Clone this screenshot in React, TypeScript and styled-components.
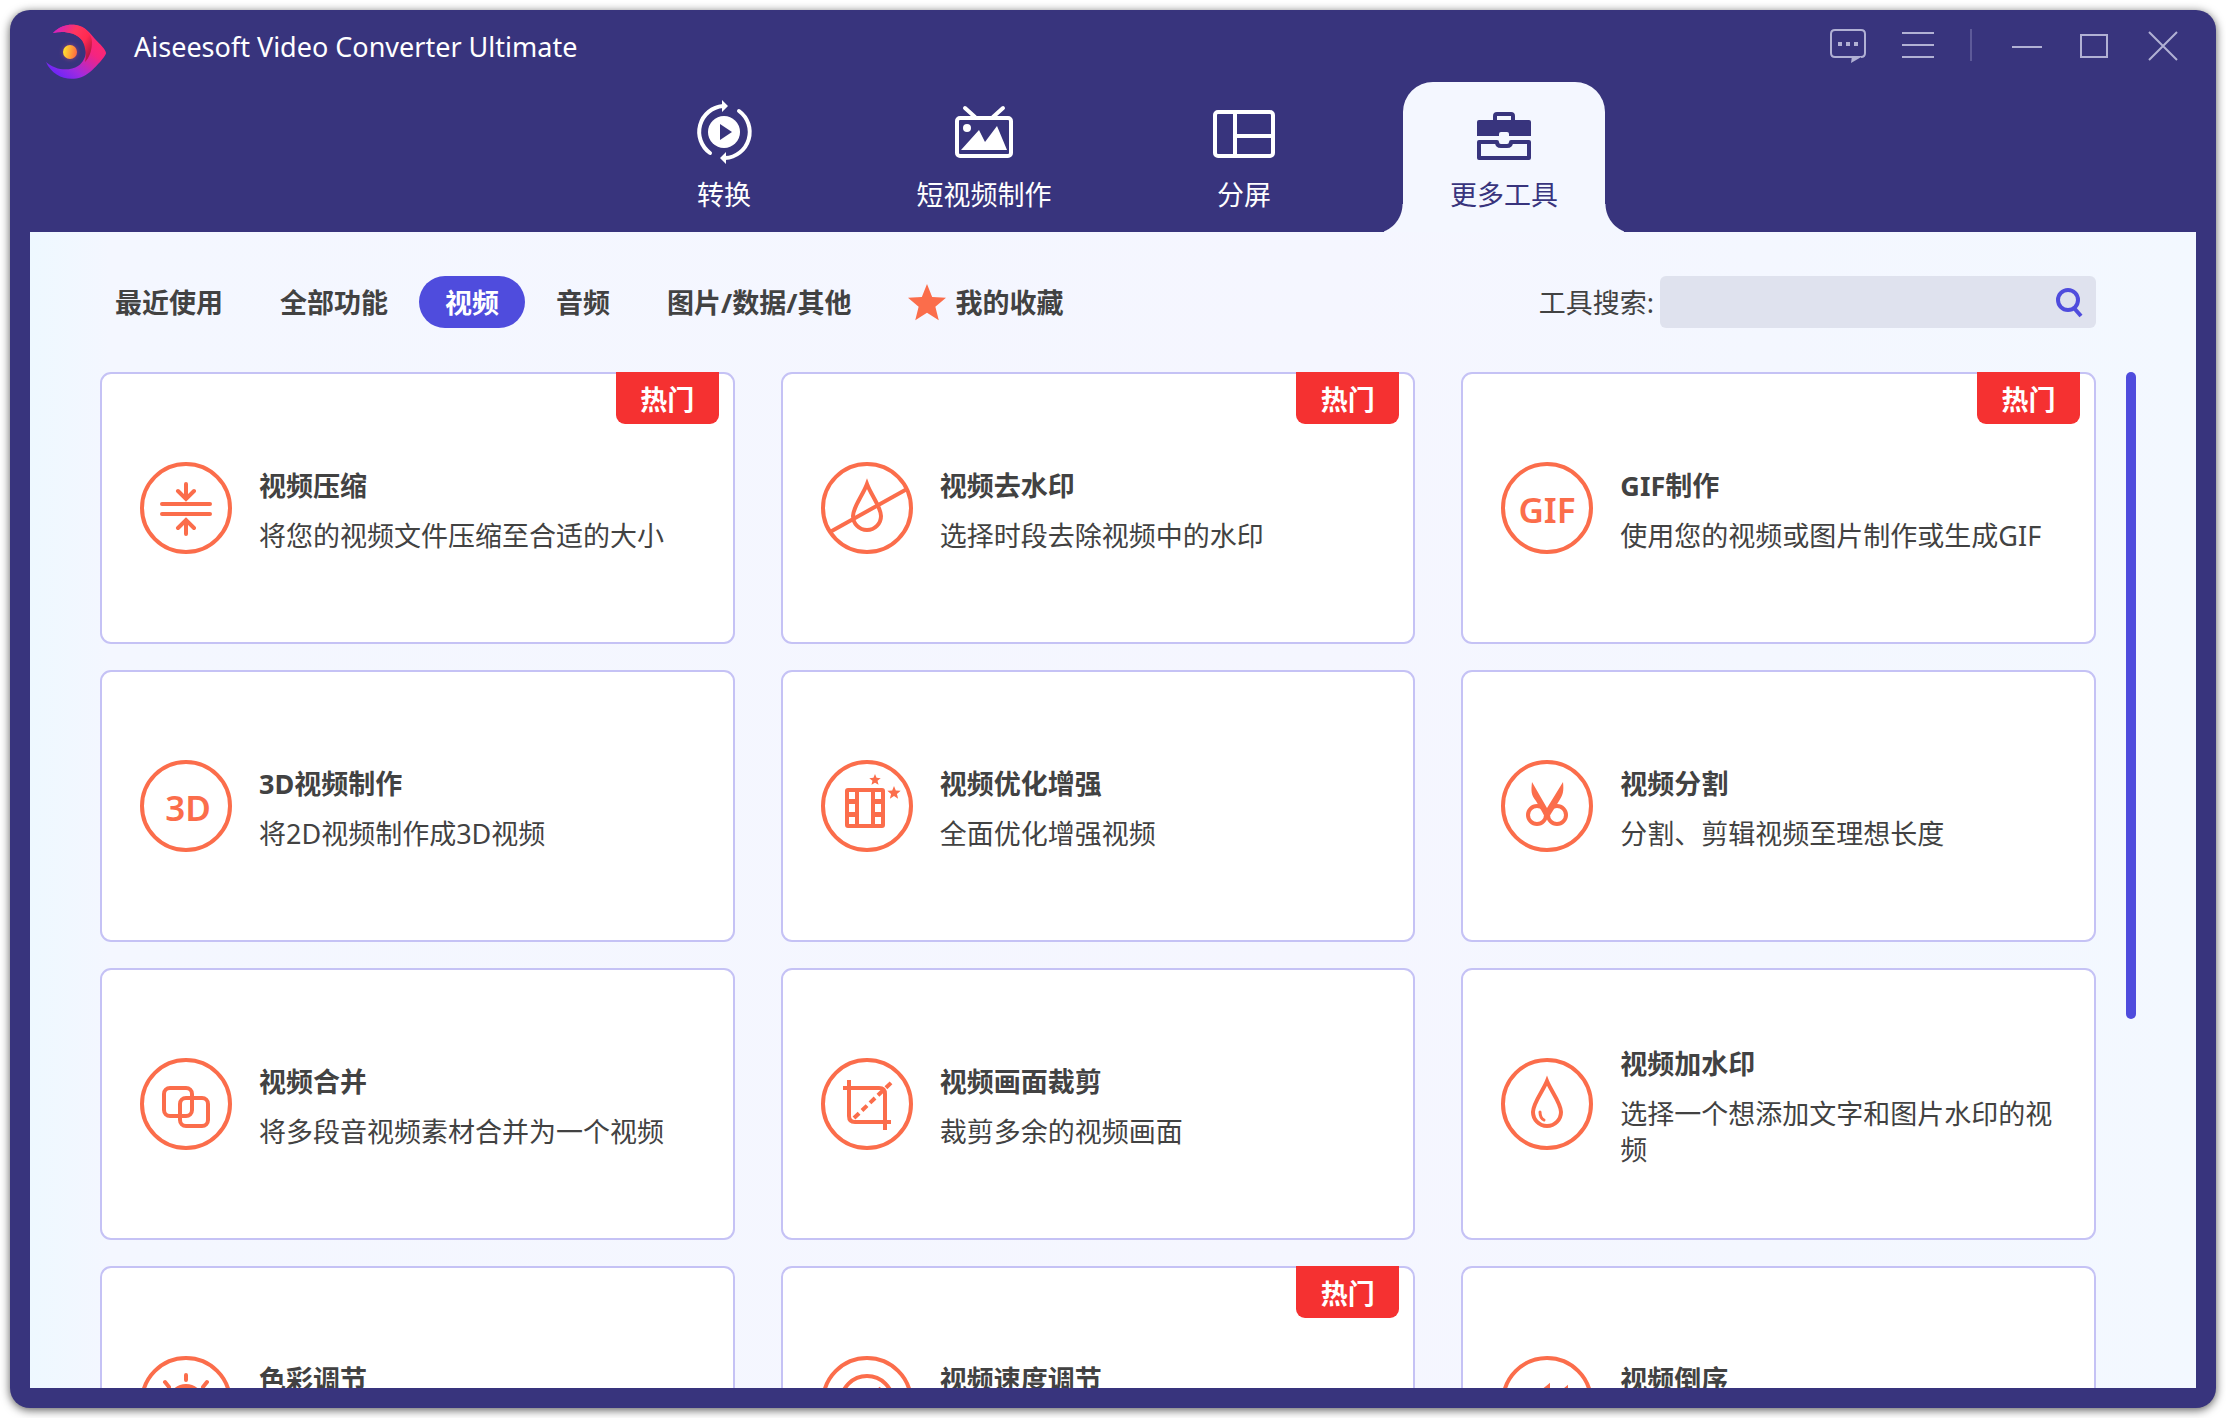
import React, { useState } from "react";
import styled, { createGlobalStyle, css } from "styled-components";

const navy = "#38347d";
const indigo = "#4f4cdd";
const coral = "#fb6d4b";
const ink = "#424242";

const GlobalStyle = createGlobalStyle`
  * { box-sizing: border-box; }
  body { margin: 0; background: #fff; }
  body, button, input { font-family: "Noto Sans", "Noto Sans CJK SC", sans-serif; }
  button { border: 0; background: none; padding: 0; color: inherit; cursor: pointer; }
`;

const Page = styled.div`
  height: 100vh;
  padding: 10px;
`;

const Window = styled.div`
  height: 100%;
  padding: 0 20px 20px;
  display: flex;
  flex-direction: column;
  background: ${navy};
  border-radius: 20px;
  box-shadow: 0 2px 10px rgba(0, 0, 0, 0.65);
`;

const TitleBar = styled.header`
  height: 72px;
  padding: 0 14px 0 15px;
  display: flex;
  justify-content: space-between;
`;

const Brand = styled.div`
  display: flex;
  gap: 27px;
  padding-top: 14px;
`;

const AppName = styled.h1`
  margin: 0;
  color: #fff;
  font-size: 27px;
  line-height: 46px;
  font-weight: 400;
`;

const Controls = styled.div`
  display: flex;
  align-items: center;
  align-self: flex-start;
  gap: 34px;
  padding-top: 17px;
  color: #b1b1d4;
`;

const ControlButton = styled.button`
  width: 36px;
  height: 36px;
  display: grid;
  place-items: center;
`;

const Divider = styled.span`
  width: 2px;
  height: 32px;
  background: #5d5a99;
`;

const Tabs = styled.nav`
  display: flex;
  justify-content: center;
  gap: 58px;
  padding-left: 2px;
`;

const flare = css`
  content: "";
  position: absolute;
  bottom: 0;
  width: 19px;
  height: 28px;
`;

const Tab = styled.button<{ $active: boolean }>`
  position: relative;
  width: 202px;
  height: 150px;
  padding-top: 18px;
  display: flex;
  flex-direction: column;
  align-items: center;
  gap: 13px;
  font-size: 27px;
  line-height: 36px;
  color: #fff;
  ${(p) =>
    p.$active &&
    css`
      color: ${navy};
      background: #f4f7ff;
      border-radius: 30px 30px 0 0;
      &::before {
        ${flare}
        right: 100%;
        background: radial-gradient(circle at -11px 0, transparent 29px, #f4f7ff 30px);
      }
      &::after {
        ${flare}
        left: 100%;
        background: radial-gradient(circle at 30px 0, transparent 29px, #f4f7ff 30px);
      }
    `}
`;

const Panel = styled.main`
  flex: 1;
  min-height: 0;
  padding: 44px 60px 0 70px;
  display: flex;
  flex-direction: column;
  gap: 44px;
  background: linear-gradient(90deg, #eef8ff 0, #f4f7ff 80px, #f5f6ff 60%, #f3f8ff 100%);
`;

const Toolbar = styled.div`
  display: flex;
  justify-content: space-between;
  align-items: center;
  margin: 0 40px 0 -11px;
`;

const Filters = styled.div`
  display: flex;
  gap: 5px;
`;

const Filter = styled.button<{ $active: boolean }>`
  height: 52px;
  padding: 2px 26px 0;
  display: flex;
  align-items: center;
  gap: 9px;
  border-radius: 26px;
  font-size: 27px;
  line-height: 50px;
  font-weight: 700;
  white-space: nowrap;
  color: ${(p) => (p.$active ? "#fff" : ink)};
  background: ${(p) => (p.$active ? indigo : "transparent")};
`;

const Search = styled.form`
  display: flex;
  align-items: center;
  gap: 6px;
`;

const SearchLabel = styled.label`
  padding-top: 2px;
  font-size: 27px;
  line-height: 50px;
  color: ${ink};
`;

const SearchBox = styled.div`
  width: 436px;
  height: 52px;
  display: flex;
  align-items: center;
  padding-right: 12px;
  border-radius: 6px;
  background: #dfe2ee;
`;

const SearchInput = styled.input`
  flex: 1;
  min-width: 0;
  height: 52px;
  padding: 0 14px;
  border: 0;
  outline: 0;
  background: transparent;
  font-size: 27px;
  color: ${ink};
`;

const SearchButton = styled.button`
  width: 30px;
  height: 32px;
  color: ${indigo};
`;

const Listing = styled.div`
  flex: 1;
  min-height: 0;
  display: flex;
  gap: 30px;
`;

const Grid = styled.section`
  flex: 1;
  display: grid;
  grid-template-columns: repeat(3, 1fr);
  grid-auto-rows: 272px;
  gap: 26px 46px;
  overflow-y: auto;
  scrollbar-width: none;
`;

const Thumb = styled.div`
  width: 10px;
  height: calc(100% * 7 / 11);
  border-radius: 5px;
  background: ${indigo};
`;

const Card = styled.button`
  position: relative;
  padding: 0 38px;
  display: flex;
  align-items: center;
  gap: 27px;
  text-align: left;
  background: #fff;
  border: 2px solid #c5c2f5;
  border-radius: 11px;
`;

const CardText = styled.span`
  flex: 1;
  padding-top: 6px;
  display: flex;
  flex-direction: column;
  gap: 14px;
  color: ${ink};
  font-size: 27px;
  line-height: 36px;
`;

const CardTitle = styled.strong`
  font-weight: 700;
`;

const HotBadge = styled.span`
  position: absolute;
  top: -2px;
  right: 14px;
  width: 103px;
  height: 52px;
  border-radius: 0 0 9px 9px;
  background: #f53131;
  color: #fff;
  font-size: 27px;
  line-height: 55px;
  font-weight: 700;
  text-align: center;
`;

const GlyphText = styled.text`
  font-family: "Noto Sans", sans-serif;
  font-size: 35px;
  font-weight: 600;
  text-anchor: middle;
`;

const starPoints = (cx: number, cy: number, r: number) =>
  Array.from({ length: 10 }, (_, i) => {
    const a = (Math.PI / 5) * i - Math.PI / 2;
    const d = i % 2 ? r * 0.44 : r;
    return `${(cx + d * Math.cos(a)).toFixed(2)},${(cy + d * Math.sin(a)).toFixed(2)}`;
  }).join(" ");

const Logo = () => (
  <svg width="62" height="56" viewBox="0 0 62 56" aria-hidden="true">
    <defs>
      <linearGradient id="ring" x1="0.1" y1="1" x2="0.8" y2="0.2">
        <stop offset="0" stopColor="#5a25ff" />
        <stop offset="0.35" stopColor="#a02ae0" />
        <stop offset="0.75" stopColor="#f52480" />
        <stop offset="1" stopColor="#ff2a6c" />
      </linearGradient>
      <linearGradient id="crest" x1="0" y1="0.2" x2="1" y2="0.8">
        <stop offset="0" stopColor="#d020c8" />
        <stop offset="0.4" stopColor="#ff3660" />
        <stop offset="0.7" stopColor="#ff2a50" />
        <stop offset="1" stopColor="#a81243" />
      </linearGradient>
      <linearGradient id="pupil" x1="0" y1="0" x2="1" y2="0.2">
        <stop offset="0" stopColor="#fff02e" />
        <stop offset="1" stopColor="#ff7040" />
      </linearGradient>
      <radialGradient id="glow">
        <stop offset="0.4" stopColor="#a8487a" stopOpacity="0.7" />
        <stop offset="1" stopColor="#38347d" stopOpacity="0" />
      </radialGradient>
    </defs>
    <path
      d="M8 9C16 1 24 0 31 1C40 2 45 9 50 15C55 20 61 26 61 29C61 32 50 44 45 48C31 60 9 56 1 38C11 47 25 47 33 42C42 36 44 22 36 15C29 8 18 7 8 9Z"
      fill="url(#ring)"
    />
    <path d="M8 9C16 1 24 0 31 1C40 3 47 10 47 18C47 27 44 34 40 38C42 30 40 20 36 15C29 8 18 7 8 9Z" fill="url(#crest)" />
    <circle cx="25" cy="28" r="12" fill="url(#glow)" />
    <circle cx="25" cy="28" r="7" fill="url(#pupil)" />
  </svg>
);

const tabIcons = {
  convert: (
    <g fill="none" stroke="currentColor" strokeWidth="4">
      <circle cx="32" cy="32" r="16" fill="currentColor" stroke="none" />
      <path d="M28 24L40 32L28 40Z" fill={navy} stroke="none" />
      <path d="M18 53A26 26 0 0 1 31 6" strokeLinecap="round" />
      <path d="M47 11A26 26 0 0 1 33 58" strokeLinecap="round" />
      <path d="M30 0L36 6L30 12Z M34 52L28 58L34 64Z" fill="currentColor" stroke="none" />
    </g>
  ),
  mv: (
    <g fill="none" stroke="currentColor" strokeWidth="4">
      <rect x="5" y="18" width="54" height="38" rx="3" />
      <path d="M13 8L23 17M51 8L41 17" strokeLinecap="round" />
      <circle cx="15" cy="28" r="4" fill="currentColor" stroke="none" />
      <path d="M9 50L27 30L33 42L45 26L55 50Z" fill="currentColor" stroke="none" />
    </g>
  ),
  collage: (
    <g fill="none" stroke="currentColor" strokeWidth="4">
      <rect x="3" y="12" width="58" height="44" rx="3" />
      <path d="M23 12V56M23 36H61" />
    </g>
  ),
  toolbox: (
    <g fill="none" stroke="currentColor" strokeWidth="4">
      <path d="M23 21V16Q23 14 25 14H39Q41 14 41 16V21" />
      <path
        d="M7 20H57Q59 20 59 22V36H37V34Q37 32 35 32H29Q27 32 27 34V36H5V22Q5 20 7 20Z"
        fill="currentColor"
        stroke="none"
      />
      <path d="M7 42H25Q25 46 29 46H35Q39 46 39 42H57V58H7Z" strokeLinejoin="round" />
    </g>
  ),
};

const toolIcons = {
  compress: (
    <g strokeLinecap="round">
      <path d="M22 42H70M22 52H70M46 22V36M38 29L46 37L54 29M46 72V58M38 66L46 58L54 66" />
    </g>
  ),
  removeMark: <path d="M46 22C42 33 32 45 32 54A14 14 0 0 0 60 54C60 45 50 33 46 22ZM9 70L86 27" />,
  gif: (
    <GlyphText x="46" y="61" fill={coral} stroke="none">
      GIF
    </GlyphText>
  ),
  threeD: (
    <GlyphText x="48" y="61" fill={coral} stroke="none">
      3D
    </GlyphText>
  ),
  enhance: (
    <g fill={coral} stroke="none">
      <path
        fillRule="evenodd"
        d="M27 28H61Q64 28 64 31V65Q64 68 61 68H27Q24 68 24 65V31Q24 28 27 28ZM28 32V39H34V32ZM28 44V52H34V44ZM28 57V64H34V57ZM38 32V64H50V32ZM54 32V39H60V32ZM54 44V52H60V44ZM54 57V64H60V57Z"
      />
      <polygon points={starPoints(54, 20, 6)} />
      <polygon points={starPoints(73, 33, 7)} />
    </g>
  ),
  trim: (
    <g>
      <circle cx="36" cy="55" r="9" />
      <circle cx="56" cy="55" r="9" />
      <path
        d="M31 22L46 48L62 22C63 31 62 35 58 41L48 57H44L35 41C30 35 30 31 31 22Z"
        fill={coral}
        stroke="none"
      />
    </g>
  ),
  merge: (
    <g>
      <rect x="24" y="30" width="28" height="28" rx="6" />
      <rect x="40" y="40" width="28" height="28" rx="6" />
    </g>
  ),
  crop: (
    <g>
      <path d="M28 22V58Q28 64 34 64H70M22 30H58Q64 30 64 36V72" />
      <path d="M33 60L72 23" strokeDasharray="7 4" />
    </g>
  ),
  addMark: (
    <g>
      <path d="M46 23C42 33 32 45 32 54A14 14 0 0 0 60 54C60 45 50 33 46 23Z" />
      <path d="M39 54Q39 60 43 62" strokeWidth="3" strokeLinecap="round" />
    </g>
  ),
  color: (
    <g strokeLinecap="round">
      <circle cx="46" cy="46" r="16" />
      <path d="M46 19V24M25 26L29 31M67 26L63 31M16 46H21M76 46H71" />
    </g>
  ),
  speed: (
    <g>
      <circle cx="46" cy="46" r="26" />
      <path d="M46 48L60 32" />
    </g>
  ),
  reverse: <path d="M47 31L27 47L47 63ZM65 33L48 47L65 61Z" fill={coral} />,
};

const tabs: { icon: keyof typeof tabIcons; label: string }[] = [
  { icon: "convert", label: "转换" },
  { icon: "mv", label: "短视频制作" },
  { icon: "collage", label: "分屏" },
  { icon: "toolbox", label: "更多工具" },
];

const filters = ["最近使用", "全部功能", "视频", "音频", "图片/数据/其他", "我的收藏"];

const tools: { icon: keyof typeof toolIcons; title: string; text?: string; hot?: boolean }[] = [
  { icon: "compress", title: "视频压缩", text: "将您的视频文件压缩至合适的大小", hot: true },
  { icon: "removeMark", title: "视频去水印", text: "选择时段去除视频中的水印", hot: true },
  { icon: "gif", title: "GIF制作", text: "使用您的视频或图片制作或生成GIF", hot: true },
  { icon: "threeD", title: "3D视频制作", text: "将2D视频制作成3D视频" },
  { icon: "enhance", title: "视频优化增强", text: "全面优化增强视频" },
  { icon: "trim", title: "视频分割", text: "分割、剪辑视频至理想长度" },
  { icon: "merge", title: "视频合并", text: "将多段音视频素材合并为一个视频" },
  { icon: "crop", title: "视频画面裁剪", text: "裁剪多余的视频画面" },
  { icon: "addMark", title: "视频加水印", text: "选择一个想添加文字和图片水印的视频" },
  { icon: "color", title: "色彩调节", text: "\u00a0" },
  { icon: "speed", title: "视频速度调节", text: "\u00a0", hot: true },
  { icon: "reverse", title: "视频倒序", text: "\u00a0" },
];

const controlIcon = (children: React.ReactNode) => (
  <svg width="36" height="36" viewBox="0 0 36 36" fill="none" stroke="currentColor" strokeWidth="2">
    {children}
  </svg>
);

export default function App() {
  const [tab, setTab] = useState("更多工具");
  const [filter, setFilter] = useState("视频");
  const [query, setQuery] = useState("");

  return (
    <>
      <GlobalStyle />
      <Page>
        <Window>
          <TitleBar>
            <Brand>
              <Logo />
              <AppName>Aiseesoft Video Converter Ultimate</AppName>
            </Brand>
            <Controls>
              <ControlButton aria-label="反馈">
                {controlIcon(
                  <>
                    <path d="M23 30H5Q1 30 1 26V7Q1 3 5 3H31Q35 3 35 7V26Q35 30 31 30" />
                    <path d="M22 29H33L21 36Z" fill="currentColor" stroke="none" />
                    <path d="M8 17H12M16 17H20M24 17H28" strokeWidth="4" />
                  </>
                )}
              </ControlButton>
              <ControlButton aria-label="菜单">{controlIcon(<path d="M2 6H34M2 18H34M2 30H34" />)}</ControlButton>
              <Divider />
              <ControlButton aria-label="最小化">{controlIcon(<path d="M6 20H36" />)}</ControlButton>
              <ControlButton aria-label="最大化">{controlIcon(<rect x="5" y="8" width="26" height="22" />)}</ControlButton>
              <ControlButton aria-label="关闭">{controlIcon(<path d="M3 5L31 33M31 5L3 33" />)}</ControlButton>
            </Controls>
          </TitleBar>
          <Tabs>
            {tabs.map((t) => (
              <Tab key={t.label} $active={t.label === tab} onClick={() => setTab(t.label)}>
                <svg width="64" height="64" viewBox="0 0 64 64" aria-hidden="true">
                  {tabIcons[t.icon]}
                </svg>
                {t.label}
              </Tab>
            ))}
          </Tabs>
          <Panel>
            <Toolbar>
              <Filters>
                {filters.map((f) => (
                  <Filter key={f} $active={f === filter} onClick={() => setFilter(f)}>
                    {f === "我的收藏" && (
                      <svg width="38" height="38" viewBox="0 0 38 38" aria-hidden="true">
                        <polygon points={starPoints(19, 20, 20)} fill={coral} />
                      </svg>
                    )}
                    {f}
                  </Filter>
                ))}
              </Filters>
              <Search onSubmit={(e) => e.preventDefault()}>
                <SearchLabel htmlFor="tool-search">工具搜索:</SearchLabel>
                <SearchBox>
                  <SearchInput id="tool-search" value={query} onChange={(e) => setQuery(e.target.value)} />
                  <SearchButton type="submit" aria-label="搜索">
                    <svg width="30" height="32" viewBox="0 0 30 32" fill="none" stroke="currentColor" strokeWidth="4">
                      <circle cx="14" cy="14" r="10" />
                      <path d="M20 22L27 30" />
                    </svg>
                  </SearchButton>
                </SearchBox>
              </Search>
            </Toolbar>
            <Listing>
              <Grid>
                {tools.map((t) => (
                  <Card key={t.title}>
                    <svg
                      width="92"
                      height="92"
                      viewBox="0 0 92 92"
                      fill="none"
                      stroke={coral}
                      strokeWidth="4"
                      aria-hidden="true"
                    >
                      <circle cx="46" cy="46" r="44" />
                      {toolIcons[t.icon]}
                    </svg>
                    <CardText>
                      <CardTitle>{t.title}</CardTitle>
                      <span>{t.text}</span>
                    </CardText>
                    {t.hot && <HotBadge>热门</HotBadge>}
                  </Card>
                ))}
              </Grid>
              <Thumb />
            </Listing>
          </Panel>
        </Window>
      </Page>
    </>
  );
}
